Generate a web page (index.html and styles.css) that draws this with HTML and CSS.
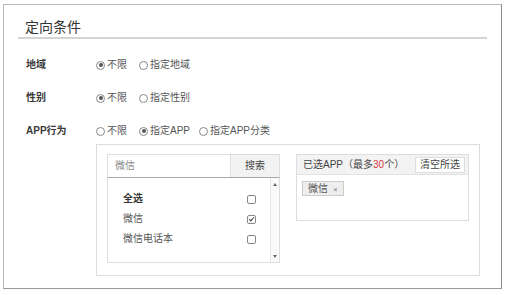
FILE: index.html
```html
<!DOCTYPE html>
<html lang="zh-CN">
  <head>
    <meta charset="UTF-8" />
    <meta name="viewport" content="width=device-width, initial-scale=1.0" />
    <title>定向条件</title>
    <link rel="stylesheet" href="styles.css">
  </head>
  <body>
    <div class="panel">
      <h2 class="panel-title">定向条件</h2>
      <div class="form">
        <div class="row row-first">
          <div class="label">地域</div>
          <div class="radios">
            <span class="radio"><i class="dot on"></i>不限</span>
            <span class="radio"><i class="dot"></i>指定地域</span>
          </div>
        </div>
        <div class="row">
          <div class="label">性别</div>
          <div class="radios">
            <span class="radio"><i class="dot on"></i>不限</span>
            <span class="radio"><i class="dot"></i>指定性别</span>
          </div>
        </div>
        <div class="row">
          <div class="label">APP行为</div>
          <div class="options">
            <div class="radios">
              <span class="radio"><i class="dot"></i>不限</span>
              <span class="radio radio-app"><i class="dot on"></i>指定APP</span>
              <span class="radio"><i class="dot"></i>指定APP分类</span>
            </div>
            <div class="picker">
              <div class="search-box">
                <div class="search-bar">
                  <div class="search-input">微信</div>
                  <div class="search-btn">搜索</div>
                </div>
                <div class="list">
                  <div class="items">
                    <div class="item item-all"><span>全选</span><i class="check"></i></div>
                    <div class="item"><span>微信</span><i class="check on"></i></div>
                    <div class="item"><span>微信电话本</span><i class="check"></i></div>
                  </div>
                  <div class="scroll">
                    <i class="arrow-up"></i>
                    <i class="arrow-down"></i>
                  </div>
                </div>
              </div>
              <div class="selected">
                <div class="selected-head">
                  <span>已选APP（最多<b class="max">30</b>个）</span>
                  <span class="clear-btn">清空所选</span>
                </div>
                <div class="selected-body">
                  <span class="tag">微信<em class="tag-x">×</em></span>
                </div>
              </div>
            </div>
          </div>
        </div>
      </div>
    </div>
  </body>
</html>
```

FILE: styles.css
```css
body {
  margin: 0;
  background: #fff;
  font-family: "Liberation Sans", "Noto Sans CJK SC", sans-serif;
  font-size: 10px;
  color: #333;
}
.panel {
  box-sizing: border-box;
  width: 499px;
  height: 285px;
  margin: 4px 0 0 3px;
  padding: 12px 14px 0;
  border: 1px solid #b8b8b8;
  border-right-color: #8a8a8a;
  border-bottom-color: #9a9a9a;
}
.panel-title {
  margin: 0;
  padding-left: 7px;
  font-size: 14px;
  font-weight: normal;
  line-height: 20px;
  color: #333;
  border-bottom: 2px solid #d4d4d4;
}
.form {
  padding-left: 8px;
}
.row {
  display: flex;
  line-height: 20px;
  margin-top: 13px;
}
.row-first {
  margin-top: 16px;
}
.label {
  width: 70px;
  flex-shrink: 0;
  font-weight: bold;
  color: #3a3a3a;
}
.radios {
  display: flex;
  align-items: center;
  height: 20px;
}
.radio {
  display: flex;
  align-items: center;
  margin-right: 12px;
  color: #555;
}
.radio-app {
  margin-right: 9px;
}
.dot {
  position: relative;
  box-sizing: border-box;
  width: 9px;
  height: 9px;
  margin-right: 2px;
  border: 1px solid #888;
  border-radius: 50%;
}
.dot.on::after {
  content: "";
  position: absolute;
  top: 1.5px;
  left: 1.5px;
  width: 4px;
  height: 4px;
  border-radius: 50%;
  background: #555;
}
.picker {
  box-sizing: border-box;
  display: flex;
  gap: 16px;
  width: 384px;
  height: 132px;
  margin-top: 3px;
  padding: 9px 10px;
  border: 1px solid #ddd;
}
.search-box {
  width: 173px;
}
.search-bar {
  box-sizing: border-box;
  display: flex;
  height: 24px;
  border: 1px solid #ddd;
  border-bottom: 1px solid #a8a8a8;
}
.search-input {
  flex: 1;
  padding-left: 7px;
  line-height: 21px;
  color: #888;
}
.search-btn {
  width: 48px;
  line-height: 21px;
  text-align: center;
  background: #f2f2f2;
  border-left: 1px solid #ddd;
  color: #444;
}
.list {
  box-sizing: border-box;
  display: flex;
  height: 85px;
  border: 1px solid #ddd;
  border-top: none;
}
.items {
  flex: 1;
  padding: 11px 14px 0 15px;
}
.item {
  display: flex;
  justify-content: space-between;
  align-items: center;
  line-height: 20px;
  color: #555;
}
.item-all {
  font-weight: bold;
  color: #333;
}
.check {
  position: relative;
  box-sizing: border-box;
  width: 9px;
  height: 9px;
  border: 1px solid #888;
  border-radius: 2px;
}
.check.on::after {
  content: "";
  position: absolute;
  left: 2px;
  top: 0;
  width: 2px;
  height: 4px;
  border-right: 1px solid #444;
  border-bottom: 1px solid #444;
  transform: rotate(40deg);
}
.scroll {
  box-sizing: border-box;
  display: flex;
  flex-direction: column;
  justify-content: space-between;
  align-items: center;
  width: 9px;
  padding: 5px 0 4px;
  background: #fafafa;
  border-left: 1px solid #e6e6e6;
}
.arrow-up {
  border-left: 2.5px solid transparent;
  border-right: 2.5px solid transparent;
  border-bottom: 3px solid #666;
}
.arrow-down {
  border-left: 2.5px solid transparent;
  border-right: 2.5px solid transparent;
  border-top: 3px solid #666;
}
.selected {
  box-sizing: border-box;
  width: 173px;
  height: 67px;
  border: 1px solid #ddd;
}
.selected-head {
  display: flex;
  align-items: center;
  justify-content: space-between;
  height: 19px;
  padding: 0 3px 0 6px;
  background: #f3f3f3;
  border-bottom: 1px solid #e2e2e2;
  color: #444;
}
.max {
  font-weight: normal;
  color: #d9333f;
}
.clear-btn {
  box-sizing: border-box;
  width: 50px;
  height: 16px;
  line-height: 14px;
  text-align: center;
  background: #fff;
  border: 1px solid #ddd;
  color: #444;
}
.selected-body {
  padding: 4px 5px;
}
.tag {
  display: inline-block;
  box-sizing: border-box;
  height: 15px;
  padding: 0 5px;
  line-height: 13px;
  background: #eee;
  border: 1px solid #ccc;
  color: #555;
}
.tag-x {
  margin-left: 5px;
  font-style: normal;
  font-size: 8px;
  color: #777;
}
```
